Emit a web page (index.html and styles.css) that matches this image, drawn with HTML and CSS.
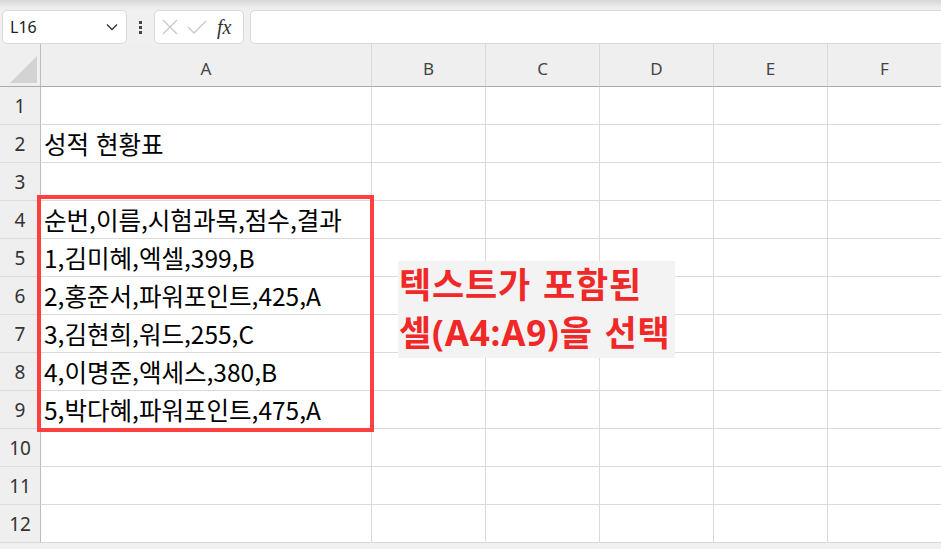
FILE: index.html
```html
<!DOCTYPE html>
<html lang="ko">
<head>
    <meta charset="UTF-8">
    <title>성적 현황표</title>
    <link rel="stylesheet" href="styles.css">
</head>
<body>

<div class="app">
    <div class="ribbon-edge"></div>

    <!-- 수식 입력줄 -->
    <div class="formula-row">
        <div class="name-box">
            <span>L16</span>
            <svg class="chevron" width="12" height="8" viewBox="0 0 12 8"><path d="M1 1.5 L6 6.5 L11 1.5" fill="none" stroke="#333" stroke-width="1.3"/></svg>
        </div>
        <div class="dots"><i></i><i></i><i></i></div>
        <div class="fx-box">
            <svg width="18" height="18" viewBox="0 0 18 18"><path d="M2 2 L16 16 M16 2 L2 16" stroke="#c8c8c8" stroke-width="1.3"/></svg>
            <svg width="20" height="18" viewBox="0 0 20 18"><path d="M1 9 L7 15 L19 3" fill="none" stroke="#c8c8c8" stroke-width="1.3"/></svg>
            <span class="fx">fx</span>
        </div>
        <div class="formula-input"></div>
    </div>

    <!-- 시트 -->
    <div class="sheet">
        <div class="corner"><div class="tri"></div></div>
        <div class="col-head">A</div>
        <div class="col-head">B</div>
        <div class="col-head">C</div>
        <div class="col-head">D</div>
        <div class="col-head">E</div>
        <div class="col-head">F</div>

        <div class="row-head">1</div><div class="cell"></div><div class="cell"></div><div class="cell"></div><div class="cell"></div><div class="cell"></div><div class="cell"></div>
        <div class="row-head">2</div><div class="cell">성적 현황표</div><div class="cell"></div><div class="cell"></div><div class="cell"></div><div class="cell"></div><div class="cell"></div>
        <div class="row-head">3</div><div class="cell"></div><div class="cell"></div><div class="cell"></div><div class="cell"></div><div class="cell"></div><div class="cell"></div>
        <div class="row-head">4</div><div class="cell">순번,이름,시험과목,점수,결과</div><div class="cell"></div><div class="cell"></div><div class="cell"></div><div class="cell"></div><div class="cell"></div>
        <div class="row-head">5</div><div class="cell">1,김미혜,엑셀,399,B</div><div class="cell"></div><div class="cell"></div><div class="cell"></div><div class="cell"></div><div class="cell"></div>
        <div class="row-head">6</div><div class="cell">2,홍준서,파워포인트,425,A</div><div class="cell"></div><div class="cell"></div><div class="cell"></div><div class="cell"></div><div class="cell"></div>
        <div class="row-head">7</div><div class="cell">3,김현희,워드,255,C</div><div class="cell"></div><div class="cell"></div><div class="cell"></div><div class="cell"></div><div class="cell"></div>
        <div class="row-head">8</div><div class="cell">4,이명준,액세스,380,B</div><div class="cell"></div><div class="cell"></div><div class="cell"></div><div class="cell"></div><div class="cell"></div>
        <div class="row-head">9</div><div class="cell">5,박다혜,파워포인트,475,A</div><div class="cell"></div><div class="cell"></div><div class="cell"></div><div class="cell"></div><div class="cell"></div>
        <div class="row-head">10</div><div class="cell"></div><div class="cell"></div><div class="cell"></div><div class="cell"></div><div class="cell"></div><div class="cell"></div>
        <div class="row-head">11</div><div class="cell"></div><div class="cell"></div><div class="cell"></div><div class="cell"></div><div class="cell"></div><div class="cell"></div>
        <div class="row-head">12</div><div class="cell"></div><div class="cell"></div><div class="cell"></div><div class="cell"></div><div class="cell"></div><div class="cell"></div>

        <!-- 선택 영역 표시 -->
        <div class="selection"></div>
        <div class="note">텍스트가 포함된<br>셀(A4:A9)을 선택</div>
    </div>
</div>

</body>
</html>
```

FILE: styles.css
```css
body {
    margin: 0;
    background: #f0f0f0;
    font-family: "Noto Sans", "Noto Sans CJK KR", sans-serif;
    overflow: hidden;
}
.app {
    width: 941px;
    height: 549px;
    overflow: hidden;
}
.ribbon-edge {
    height: 10px;
    background: linear-gradient(#d6d6d6, #ececec 70%, #f0f0f0);
}
.formula-row {
    display: flex;
    align-items: center;
    height: 34px;
    padding-left: 2px;
}
.name-box {
    box-sizing: border-box;
    width: 125px;
    height: 34px;
    background: #fff;
    border: 1px solid #d9d9d9;
    border-radius: 5px;
    display: flex;
    align-items: center;
    justify-content: space-between;
    padding: 0 8px 0 7px;
    font-size: 16px;
    color: #222;
}
.dots {
    width: 27px;
    display: flex;
    flex-direction: column;
    align-items: center;
    gap: 2px;
}
.dots i {
    width: 3px;
    height: 3px;
    background: #444;
}
.fx-box {
    box-sizing: border-box;
    width: 90px;
    height: 34px;
    background: #fff;
    border: 1px solid #d9d9d9;
    border-radius: 5px;
    display: flex;
    align-items: center;
    gap: 8px;
    padding-left: 6px;
}
.fx {
    font-family: "Liberation Serif", serif;
    font-style: italic;
    font-size: 20px;
    color: #333;
    margin-left: 2px;
}
.formula-input {
    flex: 1;
    height: 34px;
    margin-left: 6px;
    box-sizing: border-box;
    background: #fff;
    border: 1px solid #d9d9d9;
    border-right: none;
    border-radius: 5px 0 0 5px;
}
.sheet {
    position: relative;
    display: grid;
    grid-template-columns: 41px 331px 114px 114px 114px 114px 114px;
    grid-template-rows: 43px repeat(12, 38px);
    background: #fff;
}
.corner {
    background: #efefef;
    border-right: 1px solid #bdbdbd;
    border-bottom: 1px solid #ababab;
    position: relative;
}
.tri {
    position: absolute;
    right: 3px;
    bottom: 3px;
    width: 0;
    height: 0;
    border-left: 27px solid transparent;
    border-bottom: 27px solid #d3d3d3;
}
.col-head {
    background: #efefef;
    border-right: 1px solid #d9d9d9;
    border-bottom: 1px solid #ababab;
    display: flex;
    align-items: center;
    justify-content: center;
    padding-top: 6px;
    font-size: 17px;
    color: #444;
}
.row-head {
    background: #efefef;
    border-right: 1px solid #bdbdbd;
    border-bottom: 1px solid #dcdcdc;
    display: flex;
    align-items: center;
    justify-content: center;
    font-size: 19px;
    color: #333;
}
.cell {
    border-right: 1px solid #dadada;
    border-bottom: 1px solid #dadada;
    display: flex;
    align-items: center;
    padding-left: 3px;
    font-family: "Noto Sans CJK KR", sans-serif;
    font-size: 24.5px;
    color: #000;
    white-space: nowrap;
}
.selection {
    position: absolute;
    left: 37px;
    top: 151px;
    width: 329px;
    height: 229px;
    border: 4px solid #ff4040;
}
.note {
    position: absolute;
    left: 398px;
    top: 217px;
    width: 277px;
    height: 97px;
    box-sizing: border-box;
    background: #f3f3f3;
    padding-left: 1px;
    font-family: "Noto Sans", "Noto Sans CJK KR", sans-serif;
    font-weight: bold;
    font-size: 35px;
    line-height: 48px;
    letter-spacing: 0.8px;
    word-spacing: 2px;
    white-space: nowrap;
    color: #f02828;
}
```
